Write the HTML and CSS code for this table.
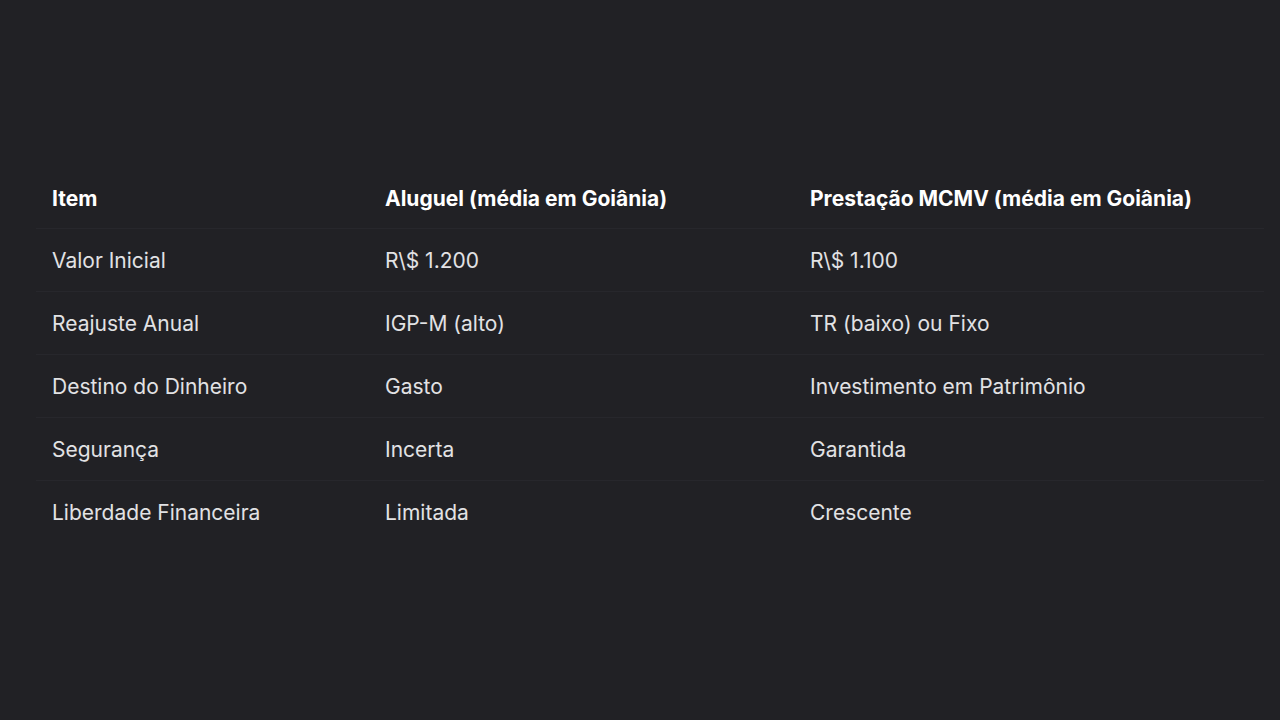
FILE: index.html
```html
<!DOCTYPE html>
<html lang="pt-BR">
<head>
<meta charset="utf-8">
<link rel="stylesheet" href="styles.css">
<title>Aluguel vs MCMV</title>
</head>
<body>
<main class="page">
  <table class="cmp">
    <thead>
      <tr>
        <th class="c1">Item</th>
        <th class="c2">Aluguel (média em Goiânia)</th>
        <th class="c3">Prestação MCMV (média em Goiânia)</th>
      </tr>
    </thead>
    <tbody>
      <tr><td>Valor Inicial</td><td>R\$ 1.200</td><td>R\$ 1.100</td></tr>
      <tr><td>Reajuste Anual</td><td>IGP-M (alto)</td><td>TR (baixo) ou Fixo</td></tr>
      <tr><td>Destino do Dinheiro</td><td>Gasto</td><td>Investimento em Patrimônio</td></tr>
      <tr><td>Segurança</td><td>Incerta</td><td>Garantida</td></tr>
      <tr><td>Liberdade Financeira</td><td>Limitada</td><td>Crescente</td></tr>
    </tbody>
  </table>
</main>
</body>
</html>
```
FILE: styles.css
```css
html, body {
  margin: 0;
  padding: 0;
  background: #212125;
  width: 1280px;
  height: 720px;
  overflow: hidden;
}
.page {
  padding: 169px 16px 0 36px;
}
.cmp {
  width: 1228px;
  border-collapse: collapse;
  font-family: Inter, "Liberation Sans", sans-serif;
  font-size: 21px;
  color: #e2e2e4;
  letter-spacing: 0;
}
.cmp th, .cmp td {
  text-align: left;
  padding: 0 16px;
  height: 62px;
  border-bottom: 1px solid #27272c;
  white-space: nowrap;
}
.cmp th {
  height: 59px;
  font-weight: 700;
  color: #ffffff;
}
.cmp tbody tr:last-child td {
  border-bottom: none;
}
.c1 { width: 301px; }
.c2 { width: 393px; }
.c3 { width: 438px; }
```
